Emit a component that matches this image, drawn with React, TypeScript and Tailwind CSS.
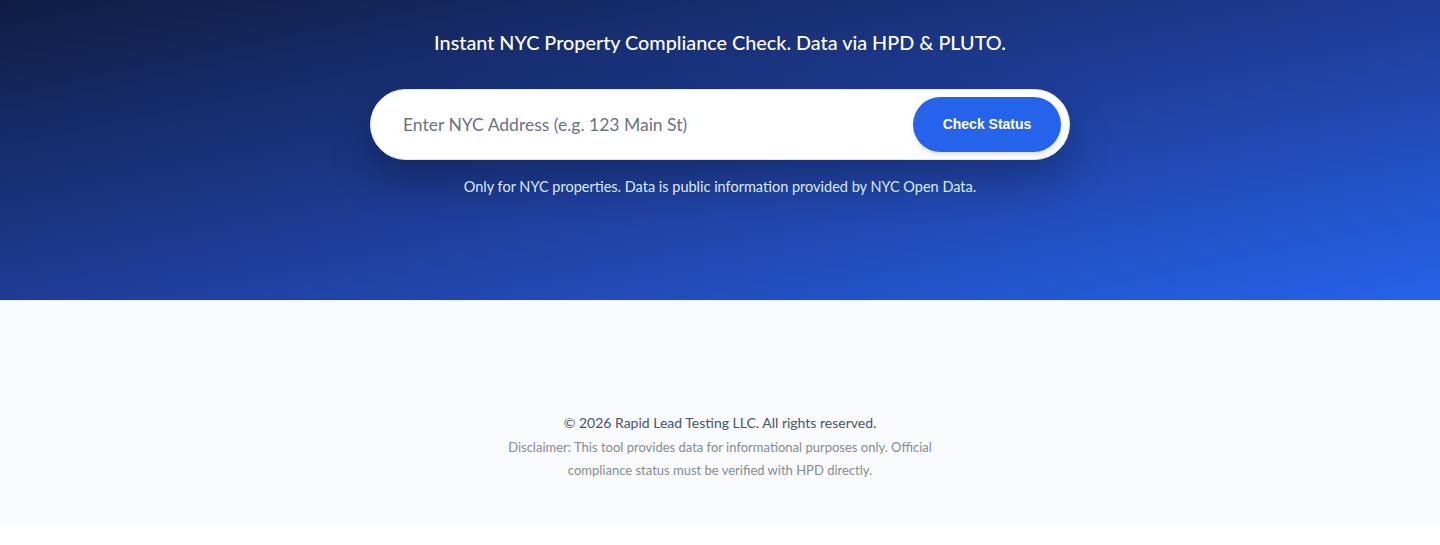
import React from 'react';

export default function App() {
  return (
    <div className="min-h-screen bg-white font-['Lato','Noto_Sans',sans-serif]">
      {/* Hero */}
      <section className="h-[300px] bg-gradient-to-br from-[#0f1d44] via-[#1e3c96] to-[#2563eb] flex flex-col items-center pt-[28px]">
        <h2 className="text-white text-[19.8px] font-medium leading-[28px]">
          Instant NYC Property Compliance Check. Data via HPD &amp; PLUTO.
        </h2>

        <form
          className="mt-[33px] w-[700px] h-[71px] bg-white rounded-full p-2 flex items-center border border-slate-200 shadow-[0_20px_40px_rgba(0,0,0,0.25)]"
          onSubmit={(e) => e.preventDefault()}
        >
          <input
            type="text"
            placeholder="Enter NYC Address (e.g. 123 Main St)"
            className="flex-1 h-full bg-transparent pl-6 pr-4 text-[17.5px] text-gray-700 placeholder:text-gray-500 outline-none"
          />
          <button
            type="submit"
            className="h-[55px] w-[148px] rounded-full bg-[#2563eb] text-white text-[14px] font-bold font-['Liberation_Sans',Arial,sans-serif] shadow-md"
          >
            Check Status
          </button>
        </form>

        <p className="mt-[17px] text-[14.5px] text-blue-100 leading-5">
          Only for NYC properties. Data is public information provided by NYC Open Data.
        </p>
      </section>

      {/* Footer */}
      <footer className="bg-slate-50 border-t border-slate-200/60 pt-[112px] pb-[42px] flex flex-col items-center text-center">
        <p className="text-[14px] text-slate-600 leading-5">
          © 2026 Rapid Lead Testing LLC. All rights reserved.
        </p>
        <p className="mt-[3px] max-w-[440px] text-[13px] text-[#868b94] leading-[23px]">
          Disclaimer: This tool provides data for informational purposes only. Official compliance status must be verified with HPD directly.
        </p>
      </footer>
    </div>
  );
}
